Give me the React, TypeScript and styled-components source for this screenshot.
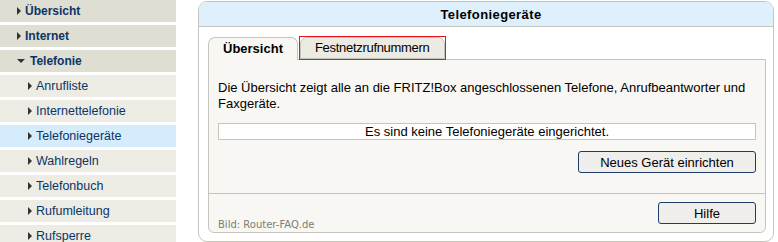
import React from "react";
import styled, { createGlobalStyle } from "styled-components";

const Global = createGlobalStyle`
  html, body { margin: 0; padding: 0; overflow: hidden; background: #fff; }
  body { font-family: "Liberation Sans", Arial, sans-serif; font-size: 13px; color: #000; }
`;

const Page = styled.div`
  display: flex;
  align-items: flex-start;
  gap: 22px;
  height: 242px;
  overflow: hidden;
`;

const Sidebar = styled.nav`
  width: 176px;
  flex: none;
  display: flex;
  flex-direction: column;
`;

const NavItem = styled.div<{ $level: number; $active?: boolean }>`
  height: 22px;
  border-bottom: 3px solid #fff;
  display: flex;
  align-items: center;
  gap: 4px;
  padding-left: ${(p) => (p.$level === 0 ? 17 : 28)}px;
  background: ${(p) => (p.$active ? "#d4ecfb" : p.$level === 0 ? "#dfded2" : "#ecebe4")};
  color: #0b3567;
  font-size: ${(p) => (p.$level === 0 ? 12 : 12.5)}px;
  font-weight: ${(p) => (p.$level === 0 ? "bold" : "normal")};
  white-space: nowrap;
`;

const Arrow = styled.span<{ $open?: boolean }>`
  display: inline-block;
  width: 0;
  height: 0;
  ${(p) =>
    p.$open
      ? `border-left: 4px solid transparent; border-right: 4px solid transparent; border-top: 4px solid #333; margin-right: 1px;`
      : `border-top: 4px solid transparent; border-bottom: 4px solid transparent; border-left: 4px solid #333;`}
`;

const Box = styled.section`
  width: 576px;
  box-sizing: border-box;
  margin-top: 1px;
  border: 1px solid #c6c5bd;
  border-radius: 9px;
  background: #fff;
  overflow: hidden;
  padding-bottom: 8px;
`;

const Header = styled.header`
  height: 24px;
  background: #def0fc;
  border-bottom: 1px solid #c6c5bd;
  display: flex;
  align-items: center;
  justify-content: center;
  font-weight: bold;
  font-size: 13px;
  letter-spacing: 0.4px;
  padding-left: 10px;
`;

const TabRow = styled.div`
  display: flex;
  gap: 2px;
  padding: 10px 0 0 9px;
  position: relative;
  z-index: 1;
  align-items: flex-start;
`;

const Tab = styled.div<{ $active?: boolean; $marked?: boolean }>`
  position: relative;
  box-sizing: border-box;
  height: ${(p) => (p.$active ? 23 : 22)}px;
  margin-bottom: ${(p) => (p.$active ? -1 : 0)}px;
  padding: 0 14px;
  border: 1px solid #c6c5bd;
  border-bottom: ${(p) => (p.$active ? "none" : "1px solid #c6c5bd")};
  border-radius: 7px 7px 0 0;
  background: ${(p) => (p.$active ? "#f8f7f3" : "#ebeae3")};
  font-weight: ${(p) => (p.$active ? "bold" : "normal")};
  letter-spacing: ${(p) => (p.$active ? "0" : "-0.3px")};
  display: flex;
  align-items: center;
  line-height: 20px;
  ${(p) => (p.$active ? "padding-bottom: 1px;" : "")}
  &::after {
    content: "";
    display: ${(p) => (p.$marked ? "block" : "none")};
    position: absolute;
    left: -2px;
    right: -2px;
    top: -2px;
    bottom: -2px;
    border: 1px solid #e4151c;
  }
`;

const Panel = styled.div`
  position: relative;
  margin: 0 7px 0 9px;
  border: 1px solid #c6c5bd;
  border-radius: 0 0 6px 6px;
  background: #f8f7f3;
`;

const Body = styled.div`
  padding: 20px 9px 20px 9px;
  display: flex;
  flex-direction: column;
`;

const Text = styled.p`
  margin: 0;
  line-height: 16px;
  font-size: 13px;
`;

const Notice = styled.div`
  margin-top: 11px;
  height: 17px;
  box-sizing: border-box;
  border: 1px solid #c6c5bd;
  background: #fff;
  text-align: center;
  line-height: 15px;
`;

const ButtonRow = styled.div<{ $top: number }>`
  margin-top: ${(p) => p.$top}px;
  display: flex;
  justify-content: flex-end;
  padding-right: 0;
`;

const Button = styled.button<{ $width: number }>`
  width: ${(p) => p.$width}px;
  height: 22px;
  box-sizing: border-box;
  border: 1px solid #1c3d6c;
  border-radius: 3px;
  background: #efeeea;
  font-family: "Liberation Sans", Arial, sans-serif;
  font-size: 13px;
  color: #000;
  padding: 0;
`;

const Footer = styled.div`
  border-top: 1px solid #c6c5bd;
  padding: 8px 9px 8px;
`;

const Watermark = styled.span`
  position: absolute;
  left: 9px;
  bottom: 1px;
  font-family: "DejaVu Sans", Verdana, sans-serif;
  font-size: 10px;
  color: #7d7d75;
  line-height: 12px;
`;

const nav = [
  { label: "Übersicht", level: 0 },
  { label: "Internet", level: 0 },
  { label: "Telefonie", level: 0, open: true },
  { label: "Anrufliste", level: 1 },
  { label: "Internettelefonie", level: 1 },
  { label: "Telefoniegeräte", level: 1, active: true },
  { label: "Wahlregeln", level: 1 },
  { label: "Telefonbuch", level: 1 },
  { label: "Rufumleitung", level: 1 },
  { label: "Rufsperre", level: 1 },
];

export default function App() {
  return (
    <>
      <Global />
      <Page>
        <Sidebar>
          {nav.map((n) => (
            <NavItem key={n.label} $level={n.level} $active={n.active}>
              <Arrow $open={n.open} />
              {n.label}
            </NavItem>
          ))}
        </Sidebar>
        <Box>
          <Header>Telefoniegeräte</Header>
          <TabRow>
            <Tab $active>Übersicht</Tab>
            <Tab $marked>Festnetzrufnummern</Tab>
          </TabRow>
          <Panel>
            <Body>
              <Text>
                Die Übersicht zeigt alle an die FRITZ!Box angeschlossenen Telefone, Anrufbeantworter und Faxgeräte.
              </Text>
              <Notice>Es sind keine Telefoniegeräte eingerichtet.</Notice>
              <ButtonRow $top={11}>
                <Button $width={178}>Neues Gerät einrichten</Button>
              </ButtonRow>
            </Body>
            <Footer>
              <ButtonRow $top={0}>
                <Button $width={98}>Hilfe</Button>
              </ButtonRow>
            </Footer>
            <Watermark>Bild: Router-FAQ.de</Watermark>
          </Panel>
        </Box>
      </Page>
    </>
  );
}
